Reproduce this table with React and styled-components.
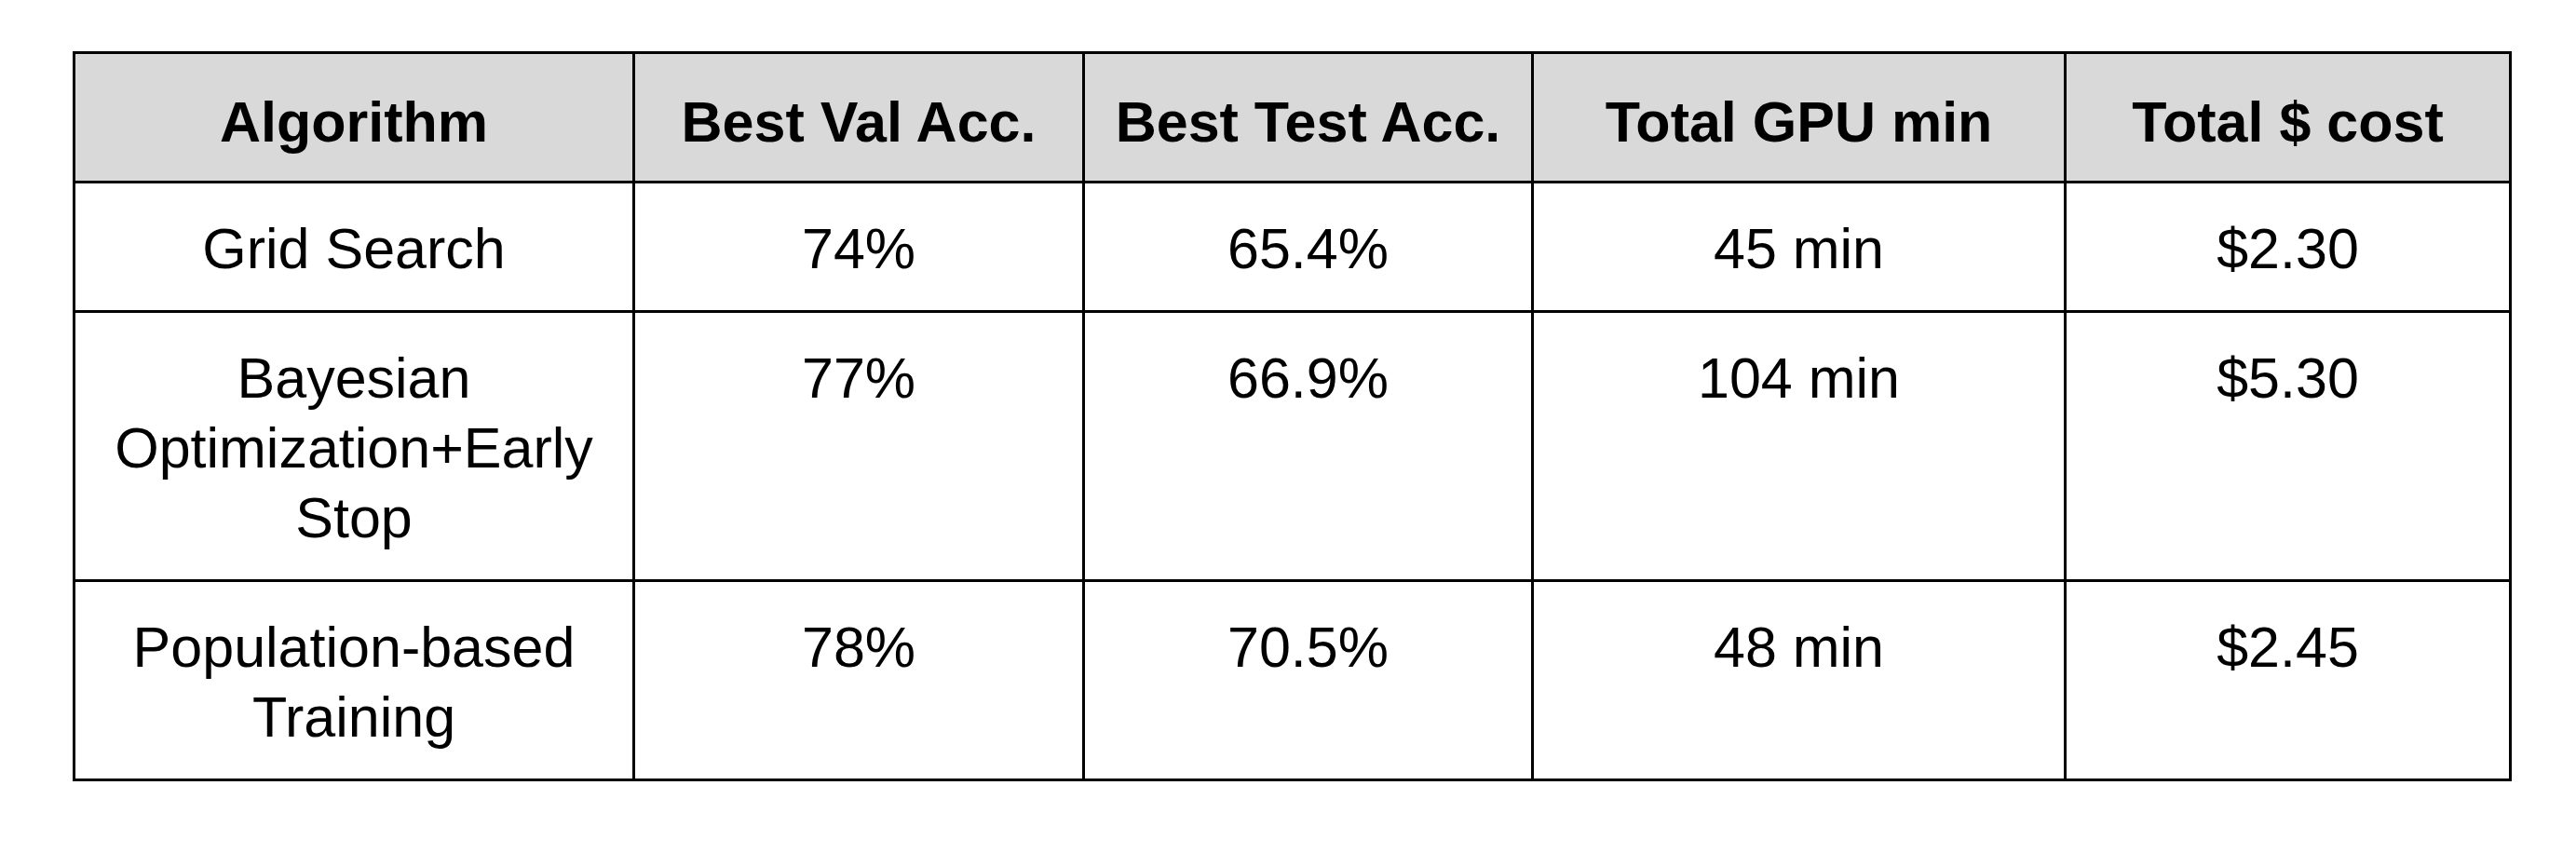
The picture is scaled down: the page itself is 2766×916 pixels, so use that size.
import styled, { createGlobalStyle } from "styled-components"

const GlobalStyle = createGlobalStyle`
  html, body {
    margin: 0;
    padding: 0;
    background: #ffffff;
  }
  body {
    font-family: "Liberation Sans", Arial, sans-serif;
    color: #000000;
  }
`

const columns = ["Algorithm", "Best Val Acc.", "Best Test Acc.", "Total GPU min", "Total $ cost"]

const rows = [
    ["Grid Search", "74%", "65.4%", "45 min", "$2.30"],
    ["Bayesian Optimization+Early Stop", "77%", "66.9%", "104 min", "$5.30"],
    ["Population-based Training", "78%", "70.5%", "48 min", "$2.45"],
]

function App() {
    return (
        <Page>
            <GlobalStyle />
            <Table>
                {columns.map((c) => (
                    <HeadCell key={c}>{c}</HeadCell>
                ))}
                {rows.map((row) =>
                    row.map((value, i) => (
                        <Cell key={row[0] + i}>{value}</Cell>
                    ))
                )}
            </Table>
        </Page>
    )
}

const Page = styled.div`
    padding: 55px 0 0 78px;
    min-height: 916px;
    box-sizing: border-box;
`

const Table = styled.div`
    display: grid;
    grid-template-columns: 601px 483px 482px 572px 478px;
    width: max-content;
    border-top: 3px solid #000;
    border-left: 3px solid #000;
`

const Cell = styled.div`
    box-sizing: border-box;
    border-right: 3px solid #000;
    border-bottom: 3px solid #000;
    padding: 33px 20px 28px;
    font-size: 61px;
    line-height: 75px;
    text-align: center;
    color: #000;
`

const HeadCell = styled(Cell)`
    background: #d9d9d9;
    font-weight: 700;
    padding-top: 36px;
    padding-bottom: 25px;
    white-space: nowrap;
`

export default App
